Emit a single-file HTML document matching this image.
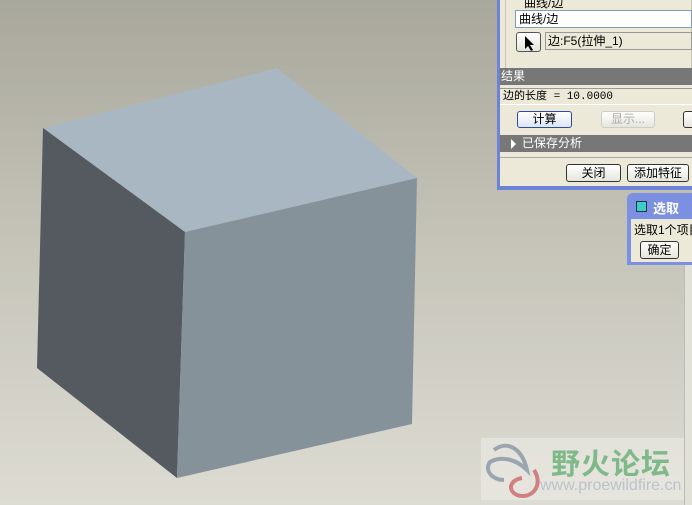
<!DOCTYPE html>
<html><head><meta charset="utf-8"><style>
*{margin:0;padding:0;box-sizing:border-box}
body{width:692px;height:505px;overflow:hidden;position:relative;background:linear-gradient(#a8a79b,#c6c5ba 50%,#dddcd3);font-family:"Liberation Sans","Noto Sans CJK SC",sans-serif;font-size:12px;color:#000}
.a{position:absolute}
.btn{position:absolute;border:1px solid #333;border-radius:3px;background:linear-gradient(#fff,#e6e5dc);text-align:center;line-height:15px;font-size:12px}
</style></head><body>
<svg class="a" style="left:0;top:0" width="692" height="505">
<polygon points="43,128 277,68 417,178 185,232" fill="#a9b7c3"/>
<polygon points="43,128 185,232 177,478 37,368" fill="#545a60"/>
<polygon points="185,232 417,178 412,424 177,478" fill="#86929a"/>
</svg>
<div class="a" style="left:684px;top:265px;width:8px;height:240px;background:#e2e1d8;border-left:1px solid #bbb"></div>
<!-- main dialog -->
<div class="a" style="left:497px;top:0;width:195px;height:190px;background:#6d84d6;"></div>
<div class="a" style="left:500px;top:0;width:192px;height:186px;background:#ece9d8;"></div>
<div class="a" style="left:505px;top:0;width:187px;height:78px;border:1px solid #c8c5b5;border-top:none;border-radius:0 0 0 4px"></div>
<div class="a" style="left:522px;top:-6px;font-size:12px;background:#ece9d8;padding:0 2px">曲线/边</div>
<div class="a" style="left:515px;top:10px;width:177px;height:18px;background:#fff;border:1px solid #7f9db9;padding-left:3px;line-height:16px">曲线/边</div>
<div class="btn" style="left:516px;top:32px;width:25px;height:20px;border-color:#555"><svg width="12" height="16" style="margin-top:2px"><path d="M2 1 L2 14 L5 11 L8 16 L10 15 L7 10 L11 10 Z" fill="#000"/></svg></div>
<div class="a" style="left:545px;top:32px;width:147px;height:18px;background:#ece9d8;border:1px solid #999;padding-left:2px;line-height:16px">边:F5(拉伸_1)</div>
<div class="a" style="left:500px;top:68px;width:192px;height:17px;background:#777;color:#fff;padding-left:1px;line-height:16px">结果</div>
<div class="a" style="left:500px;top:88px;width:192px;height:17px;border-top:1px solid #999;border-bottom:1px solid #fff;padding-left:3px;line-height:16px;font-family:'Liberation Mono','Noto Sans CJK SC',monospace;font-size:11px">边的长度 = 10.0000</div>
<div class="btn" style="left:517px;top:111px;width:55px;height:17px;border-color:#2d4a9c;background:linear-gradient(#fff,#dde5f5)">计算</div>
<div class="btn" style="left:601px;top:111px;width:54px;height:17px;border-color:#ccc;color:#aaa">显示...</div>
<div class="btn" style="left:683px;top:111px;width:12px;height:17px"></div>
<div class="a" style="left:500px;top:135px;width:192px;height:17px;background:#777;color:#fff;padding-left:22px;line-height:16px">已保存分析</div>
<div class="a" style="left:511px;top:139px;width:0;height:0;border-left:5px solid #fff;border-top:5px solid transparent;border-bottom:5px solid transparent"></div>
<div class="a" style="left:500px;top:157px;width:192px;height:1px;background:#aaa"></div>
<div class="btn" style="left:566px;top:164px;width:55px;height:18px;line-height:16px">关闭</div>
<div class="btn" style="left:627px;top:164px;width:62px;height:18px;line-height:16px">添加特征</div>
<!-- select dialog -->
<div class="a" style="left:627px;top:193px;width:70px;height:72px;background:#7b90e0;border-radius:6px 0 0 0"></div>
<div class="a" style="left:636px;top:201px;width:11px;height:11px;background:#3ccdc8;border:1px solid #234"></div>
<div class="a" style="left:653px;top:198px;color:#fff;font-weight:bold;font-size:13px">选取</div>
<div class="a" style="left:631px;top:219px;width:61px;height:43px;background:#ece9d8;padding:2px 3px;font-size:12px;white-space:nowrap;overflow:hidden">选取1个项目</div>
<div class="btn" style="left:640px;top:241px;width:39px;height:18px;line-height:16px">确定</div>
<!-- watermark -->
<div class="a" style="left:481px;top:438px;width:203px;height:62px;background:rgba(236,235,228,0.6)"></div>
<svg class="a" style="left:482px;top:440px" width="60" height="62"><path d="M12 10 C25 0 40 8 45 30 C35 20 20 15 8 22 C2 30 10 40 22 40" stroke="#9aa5b0" stroke-width="4" fill="none"/><path d="M52 30 C62 45 50 60 35 55 C25 50 28 40 40 38" stroke="#d08080" stroke-width="4" fill="none"/></svg>
<div class="a" style="left:551px;top:441px;font-size:29px;font-weight:bold;color:#7fb98a;letter-spacing:1px">野火论坛</div>
<div class="a" style="left:540px;top:477px;font-size:16px;color:#b8c4cc">www.proewildfire.cn</div>
</body></html>
